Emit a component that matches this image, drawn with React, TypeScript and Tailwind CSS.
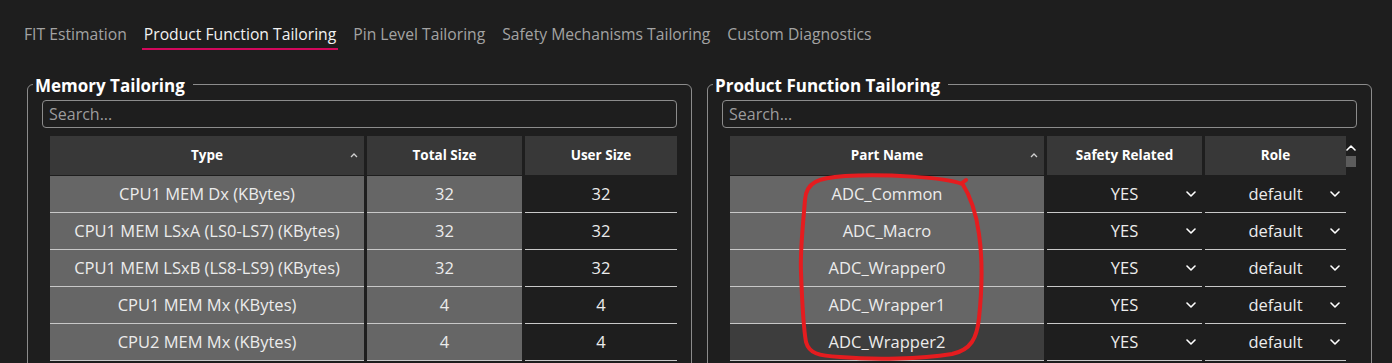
import React from "react"

const font = "font-['Open_Sans','Noto_Sans',sans-serif]"

const tabs = [
  "FIT Estimation",
  "Product Function Tailoring",
  "Pin Level Tailoring",
  "Safety Mechanisms Tailoring",
  "Custom Diagnostics",
]

const memoryRows = [
  ["CPU1 MEM Dx (KBytes)", "32", "32"],
  ["CPU1 MEM LSxA (LS0-LS7) (KBytes)", "32", "32"],
  ["CPU1 MEM LSxB (LS8-LS9) (KBytes)", "32", "32"],
  ["CPU1 MEM Mx (KBytes)", "4", "4"],
  ["CPU2 MEM Mx (KBytes)", "4", "4"],
]

const parts = ["ADC_Common", "ADC_Macro", "ADC_Wrapper0", "ADC_Wrapper1", "ADC_Wrapper2"]

const Chevron = ({ up = false, className = "" }: { up?: boolean; className?: string }) => (
  <svg width="10" height="6" viewBox="0 0 10 6" className={className}>
    <polyline
      points={up ? "1,5 5,1 9,5" : "1,1 5,5 9,1"}
      fill="none"
      stroke="currentColor"
      strokeWidth="1.6"
      strokeLinecap="round"
      strokeLinejoin="round"
    />
  </svg>
)

const SortMark = () => (
  <svg width="8" height="5" viewBox="0 0 8 5" className="text-[#d0d0d0]">
    <polyline points="1,4 4,1 7,4" fill="none" stroke="currentColor" strokeWidth="1.3" />
  </svg>
)

const HeadCell = ({ label, w, sort = false }: { label: string; w: string; sort?: boolean }) => (
  <div className={`${w} h-[39px] bg-[#383838] grid grid-cols-[24px_1fr_24px] items-center`}>
    <span />
    <span className="text-center text-[13.5px] font-bold text-white">{label}</span>
    <span className="flex justify-end pr-[6px]">{sort && <SortMark />}</span>
  </div>
)

const Cell = ({ children, w, bg }: { children: React.ReactNode; w: string; bg: string }) => (
  <div
    className={`${w} ${bg} h-[37px] border-b border-[#c8c8c8] flex items-center justify-center text-[16.5px] text-[#ececec]`}
  >
    {children}
  </div>
)

const SelectCell = ({ value, w }: { value: string; w: string }) => (
  <div
    className={`${w} h-[37px] border-b border-[#c8c8c8] grid grid-cols-[24px_1fr_24px] items-center text-[16.5px] text-[#ececec]`}
  >
    <span />
    <span className="text-center">{value}</span>
    <span className="flex justify-end pr-[6px] text-white">
      <Chevron />
    </span>
  </div>
)

const Panel = ({ title, children }: { title: string; children: React.ReactNode }) => (
  <fieldset className="w-[665px] border border-[#8c8c8c] rounded-[6px] px-[14px] pb-4">
    <legend className="-ml-[9px] pl-[2px] pr-[8px] pt-[4px] text-[17px] leading-[20px] font-bold text-white">
      {title}
    </legend>
    <div className="mt-[4px] h-[28px] border border-[#8c8c8c] rounded-[4px] flex items-center px-[6px] text-[16px] text-[#9c9c9c]">
      Search...
    </div>
    <div className="mt-[8px] ml-[8px]">{children}</div>
  </fieldset>
)

export default function App() {
  return (
    <div className={`relative w-[1392px] h-[363px] overflow-hidden bg-[#1e1e1e] ${font}`}>
      <nav className="flex gap-[13px] pl-[22px] pt-[22px]">
        {tabs.map((t, i) => (
          <div
            key={t}
            className={`px-[2px] pb-[2px] text-[15.7px] leading-[24px] border-b-2 ${
              i === 1 ? "border-[#d3085c] text-[#f2f2f2]" : "border-transparent text-[#a3a3a3]"
            }`}
          >
            {t}
          </div>
        ))}
      </nav>

      <div className="flex gap-[15px] pl-[27px] mt-[22px]">
        <Panel title="Memory Tailoring">
          <div className="flex gap-[3px]">
            <HeadCell label="Type" w="w-[314px]" sort />
            <HeadCell label="Total Size" w="w-[155px]" />
            <HeadCell label="User Size" w="w-[152px]" />
          </div>
          <div className="mt-[1px] flex flex-col">
            {memoryRows.map((r) => (
              <div key={r[0]} className="flex gap-[3px]">
                <Cell w="w-[314px]" bg="bg-[#666666]">{r[0]}</Cell>
                <Cell w="w-[155px]" bg="bg-[#666666]">{r[1]}</Cell>
                <Cell w="w-[152px]" bg="bg-[#1e1e1e]">{r[2]}</Cell>
              </div>
            ))}
          </div>
        </Panel>

        <Panel title="Product Function Tailoring">
          <div className="flex">
            <div className="flex flex-col">
              <div className="flex gap-[3px]">
                <HeadCell label="Part Name" w="w-[314px]" sort />
                <HeadCell label="Safety Related" w="w-[155px]" />
                <HeadCell label="Role" w="w-[141px]" />
              </div>
              <div className="mt-[1px] flex flex-col">
                {parts.map((p, i) => (
                  <div key={p} className="flex gap-[3px]">
                    <Cell w="w-[314px]" bg={i === 4 ? "bg-[#3d3d3d]" : "bg-[#666666]"}>
                      {p}
                    </Cell>
                    <SelectCell value="YES" w="w-[155px]" />
                    <SelectCell value="default" w="w-[141px]" />
                  </div>
                ))}
              </div>
            </div>
            <div className="w-[10px] flex flex-col items-center pt-[9px] text-white">
              <Chevron up />
              <div className="mt-[5px] w-[10px] h-[11px] bg-[#5c5c5c]" />
            </div>
          </div>
        </Panel>
      </div>

      <svg className="absolute left-0 top-0 pointer-events-none" width="1392" height="363">
        <path
          d="M 962 184 C 945 177, 885 174, 845 176 C 818 178, 806 182, 805 200 C 803 225, 800 250, 801 272 C 802 300, 803 325, 806 342 C 809 353, 818 356, 840 357 C 875 360, 920 359, 952 354 C 971 350, 977 338, 979 318 C 982 290, 983 262, 979 234 C 976 212, 971 197, 962 183 L 966 180"
          fill="none"
          stroke="#e51c1f"
          strokeWidth="4"
          strokeLinecap="round"
          strokeLinejoin="round"
        />
      </svg>
    </div>
  )
}
